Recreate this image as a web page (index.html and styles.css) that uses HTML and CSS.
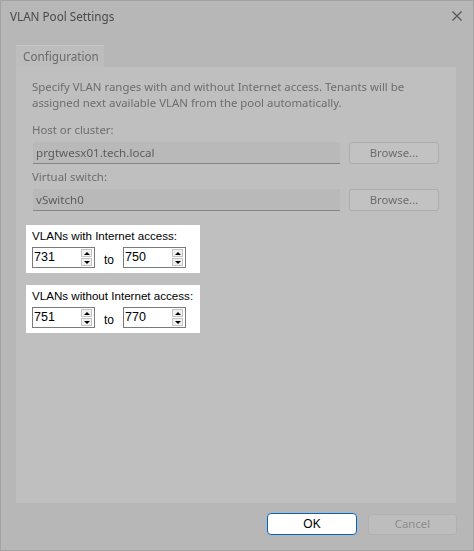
FILE: index.html
```html
<!DOCTYPE html>
<html lang="en">
<head>
  <meta charset="UTF-8">
  <meta name="viewport" content="width=device-width, initial-scale=1.0">
  <title>VLAN Pool Settings</title>
  <link rel="stylesheet" href="styles.css">
</head>
<body>
  <div class="window">
    <div class="titlebar dim">
      <span class="title">VLAN Pool Settings</span>
      <svg class="close" width="10" height="10" viewBox="0 0 10 10">
        <path d="M0.5 0.5 L9.5 9.5 M9.5 0.5 L0.5 9.5" stroke="#555" stroke-width="1.2" fill="none"/>
      </svg>
    </div>

    <div class="body">
      <div class="tabs">
        <div class="tab dim">Configuration</div>
      </div>

      <div class="panel">
        <p class="intro dim">Specify VLAN ranges with and without Internet access. Tenants will be<br>assigned next available VLAN from the pool automatically.</p>

        <div class="field-label dim">Host or cluster:</div>
        <div class="field-row dim">
          <div class="textbox">prgtwesx01.tech.local</div>
          <div class="btn">Browse...</div>
        </div>

        <div class="field-label dim">Virtual switch:</div>
        <div class="field-row dim">
          <div class="textbox">vSwitch0</div>
          <div class="btn">Browse...</div>
        </div>

        <!-- ranges stay sharp, the rest of the dialog is greyed -->
        <div class="range-box">
          <div class="range-label">VLANs with Internet access:</div>
          <div class="range-row">
            <div class="spinner">
              <span class="spin-value">731</span>
              <span class="spin-btns"><span class="spin up"></span><span class="spin down"></span></span>
            </div>
            <span class="to">to</span>
            <div class="spinner">
              <span class="spin-value">750</span>
              <span class="spin-btns"><span class="spin up"></span><span class="spin down"></span></span>
            </div>
          </div>
        </div>

        <div class="range-box">
          <div class="range-label">VLANs without Internet access:</div>
          <div class="range-row">
            <div class="spinner">
              <span class="spin-value">751</span>
              <span class="spin-btns"><span class="spin up"></span><span class="spin down"></span></span>
            </div>
            <span class="to">to</span>
            <div class="spinner">
              <span class="spin-value">770</span>
              <span class="spin-btns"><span class="spin up"></span><span class="spin down"></span></span>
            </div>
          </div>
        </div>
      </div>

      <div class="footer">
        <div class="btn-ok">OK</div>
        <div class="btn-cancel dim">Cancel</div>
      </div>
    </div>
  </div>
</body>
</html>
```

FILE: styles.css
```css
* {margin: 0; padding: 0; box-sizing: border-box;}
body {background: #b7b7b7; font-family: "Noto Sans", "Liberation Sans", sans-serif; font-size: 12px;}

.dim {filter: blur(0.5px);}

.window {width: 474px; height: 551px; border: 1px solid #a2a2a2; background: #b7b7b7; display: flex; flex-direction: column;}

.titlebar {height: 30px; display: flex; align-items: center; justify-content: space-between; padding: 0 10px 0 9px; color: #4a4a4a;}
.titlebar .title {font-size: 11.7px; padding-bottom: 1px;}
.titlebar .close {margin-right: 1px;}

.body {padding: 14px 16px 0 15px; flex: 1; display: flex; flex-direction: column;}

.tabs {display: flex;}
.tab {width: 88px; height: 22px; background: #bdbdbd; color: #6a6a6a; font-size: 11.7px; padding: 2px 0 0 7px; border-top: 1px solid #c6c6c6;}

.panel {width: 440px; height: 436px; background: #bfbfbf; padding: 12px 16px 0 16px;}

.intro {color: #6d6d6d; font-size: 11.4px; line-height: 16px; white-space: nowrap;}

.field-label {color: #6d6d6d; font-size: 11.4px; line-height: 16px; margin-top: 11px;}
.field-label + .field-row {margin-top: 4px;}
.field-row + .field-label {margin-top: 5px;}

.field-row {display: flex; align-items: center; gap: 9px;}
.textbox {width: 307px; height: 22px; margin-left: 1px; background: #b9b9b9; border-bottom: 1px solid #858585; color: #5c5c5c; font-size: 11.6px; padding: 1px 0 0 3px; line-height: 19px;}
.btn {width: 90px; height: 22px; background: #c2c2c2; border: 1px solid #adadad; border-radius: 3px; color: #6c6c6c; font-size: 11.4px; text-align: center; line-height: 19px;}

.range-box {width: 174px; margin-left: -6px; margin-top: 14px; background: #fff; padding: 3px 6px 5px 6px; font-family: "Liberation Sans", Arial, sans-serif; color: #000;}
.range-box + .range-box {margin-top: 12px;}
.range-label {font-size: 11.6px; line-height: 16px; white-space: nowrap;}
.range-row {display: flex; align-items: center; margin-top: 3px;}

.spinner {width: 63px; height: 21px; border: 1px solid #7a7a7a; background: #fff; display: flex;}
.spin-value {flex: 1; font-size: 12.5px; line-height: 18px; padding-left: 1px;}
.spin-btns {width: 11px; margin: 1px 2px 1px 0; display: flex; flex-direction: column; gap: 1px;}
.spin {flex: 1; background: #f0f0f0; border: 1px solid #c4c4c4; display: flex; align-items: center; justify-content: center;}
.spin::after {content: ""; width: 0; height: 0; border-left: 3px solid transparent; border-right: 3px solid transparent;}
.spin.up::after {border-bottom: 3px solid #000;}
.spin.down::after {border-top: 3px solid #000;}

.to {width: 28px; text-align: center; font-size: 12px; padding-top: 5px;}

.footer {display: flex; justify-content: flex-end; gap: 11px; padding-top: 10px; padding-right: 0;}
.btn-ok {width: 90px; height: 22px; background: #fff; border: 1px solid #0067c0; border-radius: 4px; font-family: "Liberation Sans", Arial, sans-serif; font-size: 12px; text-align: center; line-height: 20px; color: #000;}
.btn-cancel {width: 89px; height: 21px; margin-top: 1px; background: #bdbdbd; border: 1px solid #b1b1b1; border-radius: 3px; font-size: 11.4px; text-align: center; line-height: 18px; color: #8b8b8b;}
```
